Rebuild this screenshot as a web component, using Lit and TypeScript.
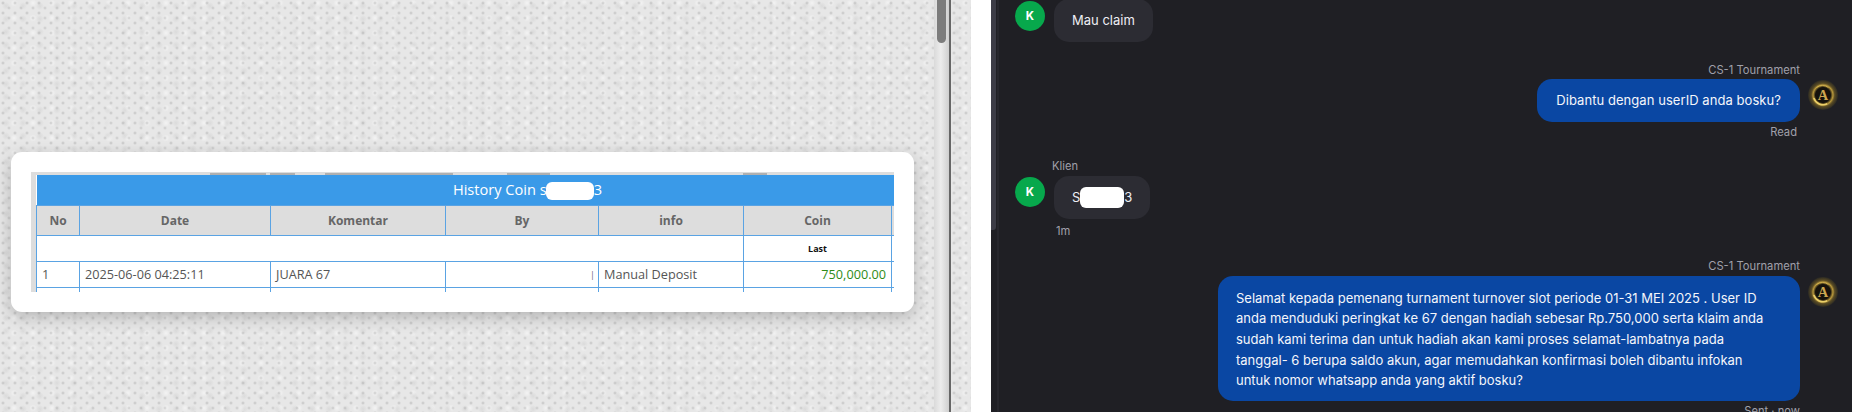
import { LitElement, html, css } from "lit";
import { customElement } from "lit/decorators.js";

const medal = html`<svg class="medal" viewBox="0 0 30 30" aria-hidden="true">
  <defs>
    <radialGradient id="g" cx="50%" cy="50%" r="50%">
      <stop offset="0%" stop-color="#15120c"/><stop offset="50%" stop-color="#15120c"/>
      <stop offset="66%" stop-color="#b8983c"/><stop offset="78%" stop-color="#5a4c24"/><stop offset="100%" stop-color="#2b2923"/>
    </radialGradient>
  </defs>
  <circle cx="15" cy="15" r="15" fill="url(#g)"/>
  <path d="M5.8 18a9.8 9.8 0 0 0 13.4 5.8" fill="none" stroke="#ecd06a" stroke-width="1.6"/>
  <path d="M8.5 7.5a9.8 9.8 0 0 1 12 0" fill="none" stroke="#cfae4e" stroke-width="1"/>
  <text x="15" y="20" text-anchor="middle" font-family="Liberation Serif, serif" font-weight="700" font-size="14.5" fill="#cba650">A</text>
</svg>`;

@customElement("app-root")
export class AppRoot extends LitElement {
  static styles = css`
    :host { display: block; width: 1852px; height: 412px; overflow: hidden; }
    * { box-sizing: border-box; }
    .page { display: flex; width: 1852px; height: 412px; background: #fff; }

    .tex {
      background-color: #e7e7e7;
      background-image:
        radial-gradient(circle at 3px 3px, rgba(135,135,135,.42) 0, rgba(150,150,150,.14) 1.3px, transparent 2.2px),
        radial-gradient(circle at 9px 8px, rgba(135,135,135,.36) 0, rgba(150,150,150,.12) 1.3px, transparent 2.2px),
        radial-gradient(circle at 6px 6px, rgba(180,180,180,.26) 0, transparent 4px),
        radial-gradient(circle at 14px 3px, rgba(255,255,255,.5) 0, transparent 4px);
      background-size: 12px 10px, 12px 10px, 17px 13px, 19px 15px;
    }
    .left { width: 934px; height: 412px; padding: 152px 20px 0 11px; }
    .card {
      height: 160px; padding: 20px; background: #fff; border-radius: 11px;
      box-shadow: 0 5px 16px rgba(0,0,0,.22);
    }
    .shot { position: relative; height: 120px; width: 863px; overflow: hidden; background: #ddd; padding: 3px 0 0 5px; }
    .cuts {
      position: absolute; left: 0; top: 1px; width: 100%; height: 2px;
      background: linear-gradient(90deg, transparent 179px, #b0b0b0 179px, #b0b0b0 235px, transparent 235px, transparent 239px, #b0b0b0 239px, #b0b0b0 264px, transparent 264px, transparent 294px, #b0b0b0 294px, #b0b0b0 422px, transparent 422px, transparent 476px, #b0b0b0 476px, #b0b0b0 519px, transparent 519px, transparent 712px, #b0b0b0 712px, #b0b0b0 736px, transparent 736px);
    }
    table {
      table-layout: fixed; border-collapse: collapse; width: 982px; background: #fff;
      font-family: "Open Sans", sans-serif; font-size: 12.7px; color: #555;
    }
    .c1 { width: 43px; } .c2 { width: 191px; } .c3 { width: 175px; } .c4 { width: 153px; }
    .c5 { width: 145px; } .c6 { width: 148px; } .c7 { width: 127px; }
    td, th { border: 1px solid #5aa3e3; padding: 0 5px; white-space: nowrap; overflow: hidden; }
    .title td { height: 30px; background: #3a9ae8; border: 0; color: #fff; font-size: 14.6px; text-align: center; }
    .head th { height: 30px; background: #ddd; color: #666; font-weight: 700; font-size: 12px; text-align: center; }
    .blank td { height: 26px; }
    td.last { text-align: center; font-size: 9px; font-weight: 700; color: #111; }
    .row td { height: 26px; }
    td.num { text-align: right; color: #2e8b17; }
    td.bar { text-align: right; padding-right: 3px; color: #667; font-size: 9px; }

    .mask { display: inline-block; background: #fff; border-radius: 6px; }
    .m1 { width: 48px; height: 18px; margin-left: -1px; vertical-align: -5px; }
    .m2 { width: 44px; height: 21px; vertical-align: -6px; }

    .track { width: 15px; height: 412px; background: linear-gradient(90deg, #dadada, #ececec 45%, #cfcfcf); padding: 0 3px; }
    .thumb { height: 43px; background: #7c7c7c; border-radius: 0 0 5px 5px; }
    .rule { width: 2px; height: 412px; background: #666; }
    .texr { width: 20px; height: 412px; }
    .gap { width: 20px; height: 412px; background: #fff; }

    .chat {
      flex: 1; height: 412px; overflow: hidden; background: #1f1f24;
      font-family: Inter, sans-serif; color: #eeeef3; display: flex;
    }
    .rail { width: 5px; height: 230px; background: #3c3c46; border-radius: 0 0 3px 0; flex: none; }
    .sep { width: 2px; margin-left: 1px; background: #26262c; flex: none; }
    .msgs { flex: 1; padding: 0 14px 0 16px; display: flex; flex-direction: column; margin-top: -1px; }
    .in { display: flex; flex-direction: column; align-items: flex-start; padding-left: 38px; position: relative; }
    .out { display: flex; flex-direction: column; align-items: flex-end; padding-right: 38px; position: relative; }
    .gap18 { margin-top: 18px; }
    .gap19 { margin-top: 19px; }
    .gap20 { margin-top: 20px; }
    .av { position: absolute; left: 0; width: 30px; height: 30px; border-radius: 50%; background: #07a84c; color: #fff;
      display: flex; align-items: center; justify-content: center; font-size: 11.5px; font-weight: 700; }
    .at2 { top: 2px; } .at19 { top: 19px; }
    .mw { position: absolute; right: 0; width: 30px; height: 30px; }
    .medal { width: 30px; height: 30px; display: block; }
    .mt18 { top: 18px; } .mt19 { top: 19px; }
    .name { height: 16px; font-size: 11.2px; line-height: 16px; color: #a0a0aa; margin-bottom: 1px; }
    .in .name { margin-bottom: 2px; margin-left: -1px; }
    .bub { font-size: 13px; line-height: 20.7px; border-radius: 15px; }
    .short { height: 43px; padding: 11px 18px; }
    .bin { background: #2c2c33; margin-left: 1px; }
    .bout { background: #0a47a3; color: #f4f6fb; }
    .dib { padding: 11px 19px; letter-spacing: .06px; }
    .wide { width: 582px; padding: 11.5px 30px 10px 18px; margin-top: 1px; }
    .meta { height: 16px; font-size: 11.2px; line-height: 16px; color: #a0a0aa; margin-top: 2px; }
    .metain { margin: 4px 0 0 3px; }
    .metaout { margin-right: 3px; }
  `;

  render() {
    return html`<div class="page">
      <div class="left tex">
        <div class="card">
          <div class="shot">
            <div class="cuts"></div>
            <table>
              <colgroup><col class="c1"><col class="c2"><col class="c3"><col class="c4"><col class="c5"><col class="c6"><col class="c7"></colgroup>
              <tr class="title"><td colspan="7">History Coin s<span class="mask m1"></span>3</td></tr>
              <tr class="head"><th>No</th><th>Date</th><th>Komentar</th><th>By</th><th>info</th><th>Coin</th><th></th></tr>
              <tr class="blank"><td colspan="5"></td><td class="last">Last</td><td></td></tr>
              <tr class="row"><td>1</td><td>2025-06-06 04:25:11</td><td>JUARA 67</td><td class="bar">|</td><td>Manual Deposit</td><td class="num">750,000.00</td><td></td></tr>
              <tr class="row"><td></td><td></td><td></td><td></td><td></td><td></td><td></td></tr>
            </table>
          </div>
        </div>
      </div>
      <div class="track"><div class="thumb"></div></div>
      <div class="rule"></div>
      <div class="texr tex"></div>
      <div class="gap"></div>
      <div class="chat">
        <div class="rail"></div>
        <div class="sep"></div>
        <div class="msgs">
          <div class="in"><div class="av at2">K</div><div class="bub bin short">Mau claim</div></div>
          <div class="out gap20">
            <div class="name">CS-1 Tournament</div>
            <div class="bub bout short dib">Dibantu dengan userID anda bosku?</div>
            <div class="meta metaout">Read</div>
            <div class="mw mt18">${medal}</div>
          </div>
          <div class="in gap18">
            <div class="name">Klien</div>
            <div class="av at19">K</div>
            <div class="bub bin short">S<span class="mask m2"></span>3</div>
            <div class="meta metain">1m</div>
          </div>
          <div class="out gap19">
            <div class="name">CS-1 Tournament</div>
            <div class="bub bout wide">Selamat kepada pemenang turnament turnover slot periode 01-31 MEI 2025 . User ID anda menduduki peringkat ke 67 dengan hadiah sebesar Rp.750,000 serta klaim anda sudah kami terima dan untuk hadiah akan kami proses selamat-lambatnya pada tanggal- 6 berupa saldo akun, agar memudahkan konfirmasi boleh dibantu infokan untuk nomor whatsapp anda yang aktif bosku?</div>
            <div class="meta">Sent · now</div>
            <div class="mw mt19">${medal}</div>
          </div>
        </div>
      </div>
    </div>`;
  }
}
